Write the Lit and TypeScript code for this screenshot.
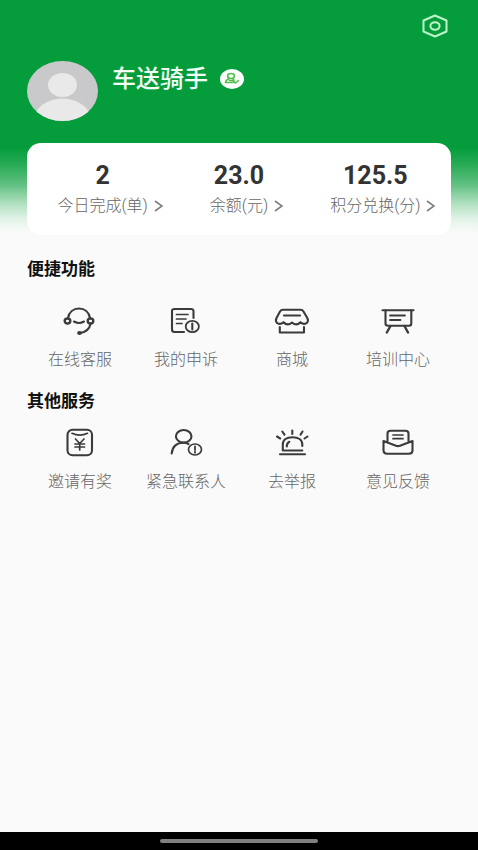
import { LitElement, html, css, svg, SVGTemplateResult } from "lit";
import { customElement } from "lit/decorators.js";

interface Stat {
  value: string;
  label: string;
}

interface Entry {
  label: string;
  icon: SVGTemplateResult;
}

const headset = svg`
  <path d="M8 13C9 7 13.500 3.500 19 3.500S29 7 30 13"/>
  <ellipse cx="7.500" cy="16" rx="2.800" ry="2.500" stroke-width="2.400"/>
  <ellipse cx="30.500" cy="16" rx="2.800" ry="2.500" stroke-width="2.400"/>
  <path d="M14 16.500Q19 19.500 24 16.500"/>
  <path d="M30.500 19C29.500 24 26 27 20 28"/>
  <ellipse cx="19.500" cy="28" rx="2.400" ry="2" fill="currentColor" stroke="none"/>`;

const appeal = svg`
  <path d="M27.500 13V6Q27.500 4 25 4H8.500Q6 4 6 6V24.500Q6 27 8.500 27H18"/>
  <path d="M10.500 9.500H22M10.500 14H20M10.500 18.500H16" stroke-width="1.700"/>
  <ellipse cx="26.300" cy="21.500" rx="6.600" ry="5.600" stroke-width="1.800"/>
  <path d="M26.300 18.500V24.500"/>`;

const shop = svg`
  <path d="M11 4.800H28.500Q30.500 4.800 31.500 6.500L35.300 13Q37 16 34.500 18.200Q31.500 20 28.500 17.200Q24.500 21.500 20 17.500Q15.500 21.500 11.500 17.200Q8.500 20 5.300 18.200Q3 16 4.500 13L8 6.500Q9 4.800 11 4.800Z"/>
  <path d="M12 10.500H28"/>
  <path d="M7.800 22V27.500H32V22"/>`;

const board = svg`
  <path d="M4.500 5.200H35.500"/>
  <path d="M7.500 5.500V18.500Q7.500 20.700 10 20.700H31Q33.300 20.700 33.300 18.500V5.500"/>
  <path d="M12 10.500H27M12 15H22.500" stroke-width="1.800"/>
  <path d="M12.500 21L8.800 27.500M26.500 21L30 27.500" stroke-width="2.400"/>`;

const packet = svg`
  <rect x="7.500" y="2.800" width="24.500" height="25.400" rx="5"/>
  <path d="M12 6.300Q19.700 10 27.500 6.300" stroke-width="1.700"/>
  <path d="M15.500 12L19.700 16.500L24 12M19.700 16.500V23M15 17H24.500M15 20H24.500" stroke-width="1.700"/>`;

const contact = svg`
  <ellipse cx="17.700" cy="9.300" rx="7.800" ry="6.300"/>
  <path d="M5.700 26.500C6.500 19 11.500 15.800 17.500 15.800Q20.500 15.800 22.500 17"/>
  <ellipse cx="29" cy="22.500" rx="6.500" ry="5.500" stroke-width="1.700"/>
  <path d="M29 19.500V23M29 24.700V25.700" stroke-width="1.800"/>`;

const alarm = svg`
  <path d="M30.300 19V17.500C30.300 13 26.500 10.200 20.500 10.200S10.800 13 10.800 17.500V23.500H30.300"/>
  <path d="M14.800 19.500Q14.800 16 17.300 14.800"/>
  <path d="M8 27.200H33"/>
  <path d="M20.300 3.500V7M10.300 4.500L12.500 7.700M30.500 4.500L28.500 7.700M5 9.500L8.200 11.500M35.500 9.500L32.500 11.500"/>`;

const feedback = svg`
  <path d="M9.500 14V6.500Q9.500 3.800 12.500 3.800H27.500Q30.500 3.800 30.500 6.500V14"/>
  <path d="M5.500 14L18 18.700Q20 19.500 22 18.700L34.500 14V23.500Q34.500 26.700 31 26.700H9Q5.500 26.700 5.500 23.500Z"/>
  <path d="M15 8H25M15 11.700H25" stroke-width="1.700"/>`;

const stats: Stat[] = [
  { value: "2", label: "今日完成(单)" },
  { value: "23.0", label: "余额(元)" },
  { value: "125.5", label: "积分兑换(分)" },
];

const quick: Entry[] = [
  { label: "在线客服", icon: headset },
  { label: "我的申诉", icon: appeal },
  { label: "商城", icon: shop },
  { label: "培训中心", icon: board },
];

const other: Entry[] = [
  { label: "邀请有奖", icon: packet },
  { label: "紧急联系人", icon: contact },
  { label: "去举报", icon: alarm },
  { label: "意见反馈", icon: feedback },
];

@customElement("app-root")
export class AppRoot extends LitElement {
  static styles = css`
    :host {
      display: flex;
      flex-direction: column;
      min-height: 100vh;
      background: #fafafa;
      font-family: Roboto, "Noto Sans CJK SC", sans-serif;
    }
    * {
      box-sizing: border-box;
    }
    button {
      border: 0;
      padding: 0;
      margin: 0;
      background: none;
      font: inherit;
      color: inherit;
      cursor: pointer;
    }
    svg {
      display: block;
      fill: none;
    }
    h1,
    h2,
    p {
      margin: 0;
    }
    .hero {
      padding: 12px 27px 0;
      background: linear-gradient(
        #059d3b 0,
        #059d3b 148px,
        #2bac58 166px,
        #62c183 185px,
        #aedfbe 203px,
        #e2f4e8 219px,
        #fafafa 233px
      );
    }
    .toolbar {
      display: flex;
      justify-content: flex-end;
    }
    .settings {
      color: #bff5cd;
      margin-right: 2px;
    }
    .profile {
      display: flex;
      gap: 14px;
      margin-top: 21px;
    }
    .who {
      display: flex;
      align-items: center;
      gap: 12px;
      height: 36px;
    }
    .name {
      font-size: 24px;
      line-height: 32px;
      font-weight: 500;
      color: #f2fff5;
    }
    .card {
      display: grid;
      grid-template-columns: repeat(3, 1fr);
      margin-top: 22px;
      padding: 17px 0 15px 15px;
      height: 92px;
      border-radius: 14px;
      background: #fff;
    }
    .stat {
      display: flex;
      flex-direction: column;
      align-items: center;
    }
    .value {
      padding-right: 15px;
      font-size: 25px;
      line-height: 32px;
      font-weight: 700;
      color: #333;
    }
    .caption {
      display: flex;
      align-items: center;
      gap: 6px;
      font-size: 16px;
      line-height: 28px;
      font-weight: 300;
      color: #666;
      white-space: nowrap;
    }
    main {
      flex: 1;
      padding: 22px 27px;
    }
    .title {
      font-size: 17px;
      line-height: 24px;
      font-weight: 700;
      color: #111;
    }
    .grid {
      display: grid;
      grid-template-columns: repeat(4, 1fr);
      margin: 14px 0 17px;
    }
    .grid.roomy {
      margin-top: 24px;
    }
    .entry {
      display: flex;
      flex-direction: column;
      align-items: center;
      gap: 11px;
      color: #3b3b3b;
    }
    .label {
      font-size: 16px;
      line-height: 24px;
      font-weight: 300;
      color: #666;
      white-space: nowrap;
    }
    .navbar {
      display: flex;
      align-items: center;
      justify-content: center;
      height: 18px;
      background: #000;
    }
    .handle {
      width: 33%;
      height: 4px;
      border-radius: 2px;
      background: #808080;
    }
  `;

  private section(title: string, entries: Entry[], roomy: boolean) {
    return html`
      <section>
        <h2 class="title">${title}</h2>
        <div class="grid ${roomy ? "roomy" : ""}">
          ${entries.map(
            (e) => html`
              <button class="entry">
                <svg
                  width="40"
                  height="32"
                  viewBox="0 0 40 32"
                  stroke="currentColor"
                  stroke-width="2.1"
                  stroke-linecap="round"
                  stroke-linejoin="round"
                  aria-hidden="true"
                >
                  ${e.icon}
                </svg>
                <span class="label">${e.label}</span>
              </button>
            `
          )}
        </div>
      </section>
    `;
  }

  render() {
    return html`
      <header class="hero">
        <div class="toolbar">
          <button class="settings" aria-label="设置">
            <svg width="28" height="28" viewBox="0 0 28 28" stroke="currentColor" stroke-width="2" stroke-linejoin="round">
              <path d="M14 3.500L25.500 8.500V19.500L14 24.500L2.500 19.500V8.500Z" />
              <ellipse cx="14" cy="14" rx="4.600" ry="3.800" />
            </svg>
          </button>
        </div>
        <div class="profile">
          <svg width="71" height="60" viewBox="0 0 71 60" aria-hidden="true">
            <defs>
              <clipPath id="face"><ellipse cx="35.500" cy="30" rx="35.500" ry="30" /></clipPath>
            </defs>
            <g clip-path="url(#face)">
              <rect width="71" height="60" fill="#c9c9cb" />
              <ellipse cx="35.500" cy="24" rx="14.500" ry="12" fill="#e9e9ea" />
              <ellipse cx="35.500" cy="60" rx="29" ry="22.500" fill="#e9e9ea" />
            </g>
          </svg>
          <div class="who">
            <h1 class="name">车送骑手</h1>
            <svg width="24" height="20" viewBox="0 0 24 20" aria-hidden="true">
              <ellipse cx="12" cy="10" rx="12" ry="10" fill="#fff" />
              <g stroke="#4fbe4a" stroke-width="1.600" stroke-linecap="round" stroke-linejoin="round">
                <ellipse cx="11" cy="7" rx="3.400" ry="2.500" />
                <path d="M9 9.800Q5.800 10.800 5.500 13.500H12.500M9.500 11.500H13M13 9.800L14 11.200M13.500 12.500L15.500 14L18.500 11.500" />
              </g>
            </svg>
          </div>
        </div>
        <div class="card">
          ${stats.map(
            (s) => html`
              <button class="stat">
                <span class="value">${s.value}</span>
                <span class="caption">
                  ${s.label}
                  <svg width="9" height="12" viewBox="0 0 9 12" stroke="#808080" stroke-width="1.700">
                    <path d="M1 1L8 6L1 11" />
                  </svg>
                </span>
              </button>
            `
          )}
        </div>
      </header>
      <main>
        ${this.section("便捷功能", quick, true)}
        ${this.section("其他服务", other, false)}
      </main>
      <footer class="navbar"><div class="handle"></div></footer>
    `;
  }
}
